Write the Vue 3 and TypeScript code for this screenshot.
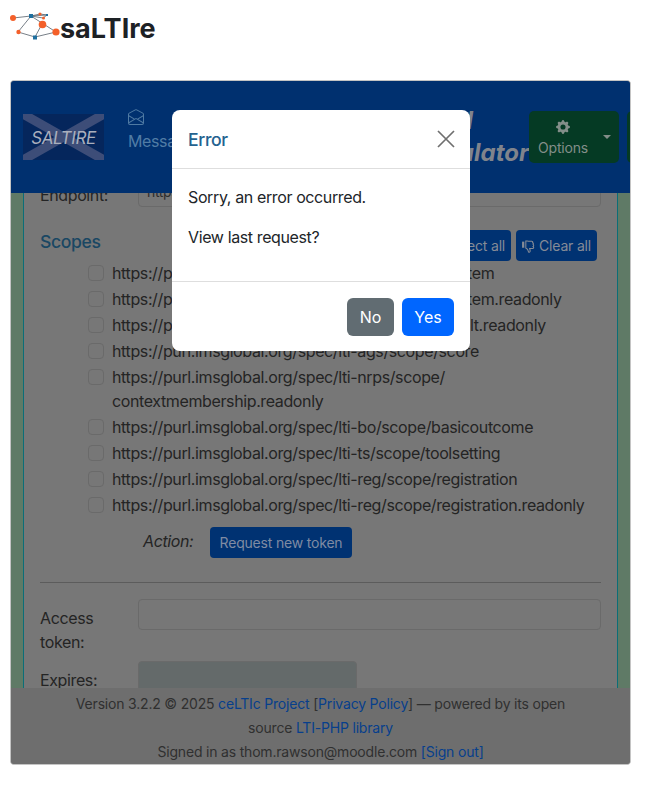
<script setup lang="ts">
const scopes: string[] = [
  'https://purl.imsglobal.org/spec/lti-ags/scope/lineitem',
  'https://purl.imsglobal.org/spec/lti-ags/scope/lineitem.readonly',
  'https://purl.imsglobal.org/spec/lti-ags/scope/result.readonly',
  'https://purl.imsglobal.org/spec/lti-ags/scope/score',
  'https://purl.imsglobal.org/spec/lti-nrps/scope/\u200Bcontextmembership.readonly',
  'https://purl.imsglobal.org/spec/lti-bo/scope/basicoutcome',
  'https://purl.imsglobal.org/spec/lti-ts/scope/toolsetting',
  'https://purl.imsglobal.org/spec/lti-reg/scope/registration',
  'https://purl.imsglobal.org/spec/lti-reg/scope/registration.readonly',
]
</script>

<template>
  <div class="page">
    <header class="site-head">
      <svg class="site-logo" width="62" height="44" viewBox="0 0 62 44">
        <g stroke="#55606a" stroke-width="0.8" fill="none">
          <path d="M13 18 31 16 47 15M31 16 18 32 35 37 56 32 31 16M35 37 42 24M31 16 40 14 47 15 43 18 31 16" />
        </g>
        <circle cx="13" cy="18" r="3" fill="#f4602a" />
        <rect x="29" y="14" width="4" height="4" fill="#1f6f9f" />
        <circle cx="40" cy="14" r="1.6" fill="#f4602a" />
        <rect x="46" y="14" width="2" height="2" fill="#1f6f9f" />
        <circle cx="43.5" cy="18" r="1.5" fill="#f4602a" />
        <circle cx="42.5" cy="24.5" r="3.8" fill="#f4602a" />
        <circle cx="18.5" cy="32" r="2.2" fill="#f4602a" />
        <rect x="33" y="35.5" width="4" height="4" fill="#1f6f9f" />
        <circle cx="56" cy="32" r="3.6" fill="#f4602a" />
      </svg>
      <span class="site-name">saLTIre</span>
    </header>

    <section class="card">
      <nav class="navbar">
        <svg class="flag" width="81" height="46" viewBox="0 0 81 46">
          <rect width="81" height="46" fill="#05265c" />
          <path d="M0 0 81 46M81 0 0 46" stroke="#3d4d78" stroke-width="9" />
          <text x="40.5" y="30" text-anchor="middle" class="flag-text">SALTIRE</text>
        </svg>
        <div class="links">
          <a class="link">
            <svg width="16" height="16" viewBox="0 0 16 16" fill="#4f7aa3">
              <path d="M8.47 1.318a1 1 0 0 0-.94 0l-6 3.2A1 1 0 0 0 1 5.4v.817l5.75 3.45L8 8.917l1.25.75L15 6.217V5.4a1 1 0 0 0-.53-.882l-6-3.2ZM15 7.383l-4.778 2.867L15 13.117V7.383Zm-.035 6.88L8 10.082l-6.965 4.18A1 1 0 0 0 2 15h12a1 1 0 0 0 .965-.738ZM1 13.116l4.778-2.867L1 7.383v5.734ZM7.059.435a2 2 0 0 1 1.882 0l6 3.2A2 2 0 0 1 16 5.4V14a2 2 0 0 1-2 2H2a2 2 0 0 1-2-2V5.4a2 2 0 0 1 1.059-1.765l6-3.2Z" />
            </svg>
            <span>Messages</span>
          </a>
        </div>
        <div class="app-title">Tool<br />emulator</div>
        <button class="opt-btn">
          <span class="opt-main">
            <svg width="14" height="14" viewBox="0 0 16 16" fill="#838e89">
              <path d="M9.405 1.05c-.413-1.4-2.397-1.4-2.81 0l-.1.34a1.464 1.464 0 0 1-2.105.872l-.31-.17c-1.283-.698-2.686.705-1.987 1.987l.169.311c.446.82.023 1.841-.872 2.105l-.34.1c-1.4.413-1.4 2.397 0 2.81l.34.1a1.464 1.464 0 0 1 .872 2.105l-.17.31c-.698 1.283.705 2.686 1.987 1.987l.311-.169a1.464 1.464 0 0 1 2.105.872l.1.34c.413 1.4 2.397 1.4 2.81 0l.1-.34a1.464 1.464 0 0 1 2.105-.872l.31.17c1.283.698 2.686-.705 1.987-1.987l-.169-.311a1.464 1.464 0 0 1 .872-2.105l.34-.1c1.4-.413 1.4-2.397 0-2.81l-.34-.1a1.464 1.464 0 0 1-.872-2.105l.17-.31c.698-1.283-.705-2.686-1.987-1.987l-.311.169a1.464 1.464 0 0 1-2.105-.872l-.1-.34ZM8 10.93a2.929 2.929 0 1 1 0-5.86 2.929 2.929 0 0 1 0 5.858Z" />
            </svg>
            <span>Options</span>
          </span>
          <span class="caret"></span>
        </button>
        <button class="opt-btn clipped"></button>
      </nav>

      <main class="main">
        <div class="panel">
          <div class="form-row">
            <label class="row-label">Endpoint:</label>
            <div class="input">https://</div>
          </div>

          <div class="scope-head">
            <h3 class="scope-title">Scopes</h3>
            <div class="scope-actions">
              <button class="small-btn">
                <svg width="14" height="14" viewBox="0 0 16 16" fill="#858b96">
                  <path d="M8.864.046C7.908-.193 7.02.53 6.956 1.466c-.072 1.051-.23 2.016-.428 2.59-.125.36-.479 1.013-1.04 1.639-.557.623-1.282 1.178-2.131 1.41C2.685 7.288 2 7.87 2 8.72v4.001c0 .845.682 1.464 1.448 1.545 1.07.114 1.564.415 2.068.723l.048.03c.272.165.578.348.97.484.397.136.861.217 1.466.217h3.5c.937 0 1.599-.477 1.934-1.064a1.86 1.86 0 0 0 .254-.912c0-.152-.023-.312-.077-.464.201-.263.38-.578.488-.901.11-.33.172-.762.004-1.149.069-.13.12-.269.159-.403.077-.27.113-.568.113-.857 0-.288-.036-.585-.113-.856a2.144 2.144 0 0 0-.138-.362 1.9 1.9 0 0 0 .234-1.734c-.206-.592-.682-1.1-1.2-1.272-.847-.282-1.803-.276-2.516-.211a9.84 9.84 0 0 0-.443.05 9.365 9.365 0 0 0-.062-4.509A1.38 1.38 0 0 0 9.125.111L8.864.046Z" />
                </svg>
                Select all
              </button>
              <button class="small-btn">
                <svg width="14" height="14" viewBox="0 0 16 16" fill="none" stroke="#858b96" stroke-width="1.2">
                  <path d="M5.5 3.2v7.2c1.6.6 2.7 2 3.1 4.3.1.7 1.9.5 1.9-1 0-1-.3-2-.6-2.8h3.3c1.6 0 1.6-2 .7-2.4.9-.6.7-1.9 0-2.2.5-.7.2-1.8-.6-2 .4-1-.3-1.8-1.1-1.8H8.5c-1 0-2-.4-3-.3Z" />
                  <rect x="1.2" y="3" width="2.6" height="7" fill="#858b96" stroke="none" />
                </svg>
                Clear all
              </button>
            </div>
          </div>

          <ul class="scope-list">
            <li v-for="scope in scopes" :key="scope" class="scope-row">
              <span class="check"></span>
              <span class="scope-text">{{ scope }}</span>
            </li>
          </ul>

          <div class="action-row">
            <em class="action-label">Action:</em>
            <button class="token-btn">Request new token</button>
          </div>

          <hr class="rule" />

          <div class="form-row">
            <label class="row-label">Access token:</label>
            <div class="input"></div>
          </div>
          <div class="form-row expires">
            <label class="row-label">Expires:</label>
            <div class="input readonly"></div>
          </div>
        </div>
      </main>

      <footer class="foot">
        <div>Version 3.2.2 © 2025 <a>ceLTIc Project</a> [<a>Privacy Policy</a>] — powered by its open source <a>LTI-PHP library</a></div>
        <div>Signed in as thom.rawson@moodle.com <a>[Sign out]</a></div>
      </footer>

      <div class="modal" role="dialog">
        <div class="modal-head">
          <h5 class="modal-title">Error</h5>
          <svg class="close" width="18" height="18" viewBox="0 0 18 18" stroke="#6f6f6f" stroke-width="1.7" fill="none">
            <path d="M1 1 17 17M17 1 1 17" />
          </svg>
        </div>
        <div class="modal-body">
          <p>Sorry, an error occurred.</p>
          <p>View last request?</p>
        </div>
        <div class="modal-foot">
          <button class="m-btn no">No</button>
          <button class="m-btn yes">Yes</button>
        </div>
      </div>
    </section>
  </div>
</template>

<style scoped>
.page {
  height: 786px;
  padding: 0 0 0 10px;
  box-sizing: border-box;
  font-family: Inter, "Liberation Sans", sans-serif;
  font-size: 16px;
  line-height: 24px;
  letter-spacing: -0.38px;
  color: #242424;
  background: #fff;
  overflow: hidden;
}
.site-head {
  height: 80px;
  display: flex;
  align-items: flex-start;
  margin-left: -10px;
}
.site-logo {
  flex: none;
  display: block;
}
.site-name {
  font-size: 27px;
  font-weight: 700;
  line-height: 30px;
  letter-spacing: 0;
  color: #1d2125;
  margin-top: 14px;
  margin-left: -2px;
}
.card {
  position: relative;
  width: 621px;
  height: 685px;
  box-sizing: border-box;
  border: 1px solid #c4c4c4;
  border-radius: 4px;
  overflow: hidden;
  display: flex;
  flex-direction: column;
  background: #777;
}
.navbar {
  flex: none;
  height: 112px;
  box-sizing: border-box;
  padding: 0 11px 0 12px;
  background: #00306f;
  display: flex;
  align-items: center;
}
.flag {
  flex: none;
  display: block;
  margin-right: 24px;
}
.flag-text {
  font-family: Inter, "Liberation Sans", sans-serif;
  font-style: italic;
  font-size: 17px;
  fill: #a9afbd;
}
.links {
  flex: 1;
  min-width: 0;
}
.link {
  display: flex;
  flex-direction: column;
  align-items: flex-start;
  gap: 4px;
  color: #517ca5;
  margin-top: -12px;
}
.link svg {
  display: block;
}
.app-title {
  flex: none;
  width: 106px;
  font-size: 24px;
  line-height: 32px;
  font-weight: 700;
  font-style: italic;
  letter-spacing: 0;
  color: #80848c;
  margin-top: 0;
}
.opt-btn {
  flex: none;
  width: 90px;
  height: 52px;
  border: 0;
  border-radius: 5px;
  background: #053a24;
  font: inherit;
  font-size: 14px;
  letter-spacing: -0.19px;
  color: #838e89;
  display: flex;
  align-items: center;
  padding: 0 0 0 9px;
  box-sizing: border-box;
}
.opt-main {
  display: flex;
  flex-direction: column;
  align-items: center;
  line-height: 20px;
  gap: 4px;
  margin-top: 4px;
}
.caret {
  width: 0;
  height: 0;
  border: 4px solid transparent;
  border-top-color: #838e89;
  border-bottom: 0;
  margin-left: 15px;
}
.clipped {
  width: 60px;
  margin-left: 8px;
  margin-right: -68px;
}
.main {
  flex: 1;
  min-height: 0;
  overflow: hidden;
  background: #5f7a66;
  padding: 0 12px;
}
.panel {
  margin-top: -17px;
  background: #777;
  border-left: 1px solid #0b6e78;
  border-right: 1px solid #0b6e78;
  padding: 0 16px;
  height: 600px;
}
.form-row {
  display: flex;
  align-items: flex-start;
  margin-bottom: 7px;
}
.row-label {
  flex: none;
  width: 98px;
  padding-top: 7px;
}
.input {
  flex: 1;
  height: 31px;
  box-sizing: border-box;
  border: 1px solid #6a6a6a;
  border-radius: 4px;
  background: #777;
  font-size: 14px;
  padding: 3px 8px;
  color: #2c2c2c;
}
.readonly {
  flex: none;
  width: 219px;
  height: 60px;
  background: #646a6a;
}
.scope-head {
  display: flex;
  justify-content: space-between;
  align-items: flex-start;
  margin-top: 23px;
  height: 31px;
}
.scope-title {
  margin: 0;
  font-size: 17.6px;
  font-weight: 500;
  color: #1a4763;
}
.scope-actions {
  display: flex;
  gap: 5px;
  margin-right: 4px;
}
.small-btn {
  height: 31px;
  border: 0;
  border-radius: 4px;
  background: #003272;
  color: #858b96;
  font: inherit;
  font-size: 14px;
  letter-spacing: -0.19px;
  padding: 0 6px 0 5px;
  display: flex;
  align-items: center;
  gap: 4px;
}
.scope-list {
  list-style: none;
  margin: 0;
  padding: 0 0 0 48px;
}
.scope-row {
  display: flex;
  align-items: flex-start;
  margin-bottom: 2px;
}
.check {
  flex: none;
  width: 16px;
  height: 16px;
  box-sizing: border-box;
  margin: 4px 8px 0 0;
  border: 1px solid #6a6a6a;
  border-radius: 4px;
  background: #777;
}
.action-row {
  display: flex;
  align-items: center;
  margin: 10px 0 0 103px;
  height: 31px;
}
.action-label {
  width: 67px;
  margin-top: -3px;
}
.token-btn {
  height: 31px;
  width: 142px;
  border: 0;
  border-radius: 4px;
  background: #003272;
  color: #7f8ba3;
  font: inherit;
  font-size: 14px;
  letter-spacing: -0.19px;
}
.rule {
  margin: 24px 0 16px;
  border: 0;
  border-top: 1px solid #5c5c5c;
}
.foot {
  flex: none;
  height: 76px;
  box-sizing: border-box;
  padding: 4px 48px 0;
  background: #6e6e6e;
  font-size: 14px;
  letter-spacing: -0.19px;
  text-align: center;
  color: #303030;
}
.foot a {
  color: #073f8c;
}
.modal {
  position: absolute;
  left: 161px;
  top: 29px;
  width: 298px;
  height: 241px;
  background: #fff;
  border-radius: 8px;
  display: flex;
  flex-direction: column;
}
.modal-head {
  height: 59px;
  box-sizing: border-box;
  flex: none;
  padding: 2px 15px 0 16px;
  display: flex;
  align-items: center;
  justify-content: space-between;
  border-bottom: 1px solid #dedede;
}
.modal-title {
  margin: 0;
  font-size: 17.6px;
  font-weight: 500;
  color: #24628f;
}
.close {
  display: block;
  margin-top: -2px;
}
.modal-body {
  flex: 1;
  padding: 16px;
  color: #212529;
}
.modal-body p {
  margin: 0 0 16px;
}
.modal-foot {
  flex: none;
  height: 70px;
  box-sizing: border-box;
  border-top: 1px solid #dedede;
  padding: 16px;
  display: flex;
  justify-content: flex-end;
  gap: 8px;
}
.m-btn {
  height: 38px;
  border: 0;
  border-radius: 6px;
  color: #fff;
  font: inherit;
  padding: 0;
}
.no {
  width: 47px;
  background: #616c72;
}
.yes {
  width: 52px;
  background: #0066ff;
}
</style>
